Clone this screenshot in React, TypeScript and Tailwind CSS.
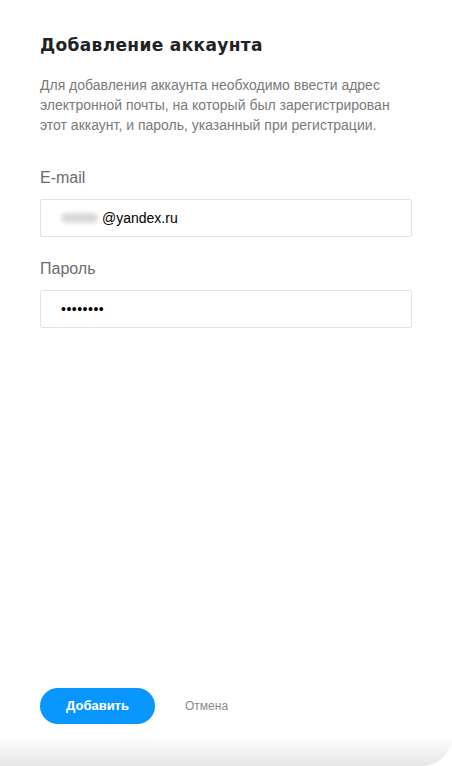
export default function App() {
  return (
    <div className="relative flex h-[766px] w-[452px] flex-col overflow-hidden bg-white font-['Liberation_Sans',Arial,sans-serif]">
      <div className="flex flex-1 flex-col px-10 pt-[33px]">
        <h1 className="font-['DejaVu_Sans',sans-serif] text-[17px] font-bold leading-6 tracking-[0.35px] text-[#222]">Добавление аккаунта</h1>
        <p className="mt-[18px] w-[362px] text-[14px] leading-5 text-[#7a7a7a]">
          Для добавления аккаунта необходимо ввести адрес электронной почты, на который был зарегистрирован этот аккаунт, и пароль, указанный при регистрации.
        </p>

        <label className="mt-[33px] text-[16px] leading-5 text-[#6b6b6b]">E-mail</label>
        <div className="mt-[11px] flex h-[38px] w-[372px] items-center rounded-[2px] border border-[#e3e3e3] px-5 text-[14px] text-black">
          <span className="mr-1 h-[10px] w-[37px] rounded-full bg-[#d9d9d9] blur-[2px]" />
          <span>@yandex.ru</span>
        </div>

        <label className="mt-[22px] text-[16px] leading-5 text-[#6b6b6b]">Пароль</label>
        <div className="mt-[11px] flex h-[38px] w-[372px] items-center rounded-[2px] border border-[#e3e3e3] px-5 text-[14px] text-black">
          <span className="tracking-[0.5px]">••••••••</span>
        </div>

        <div className="mt-auto mb-3 flex items-center gap-[30px]">
          <button className="h-9 w-[115px] rounded-full bg-[#0a96ff] text-[13px] font-bold text-white">Добавить</button>
          <span className="text-[12px] text-[#8a8a8a]">Отмена</span>
        </div>
      </div>
      <div className="h-[30px] rounded-br-[30px] bg-gradient-to-b from-white to-[#e6e6e6]" />
    </div>
  );
}
